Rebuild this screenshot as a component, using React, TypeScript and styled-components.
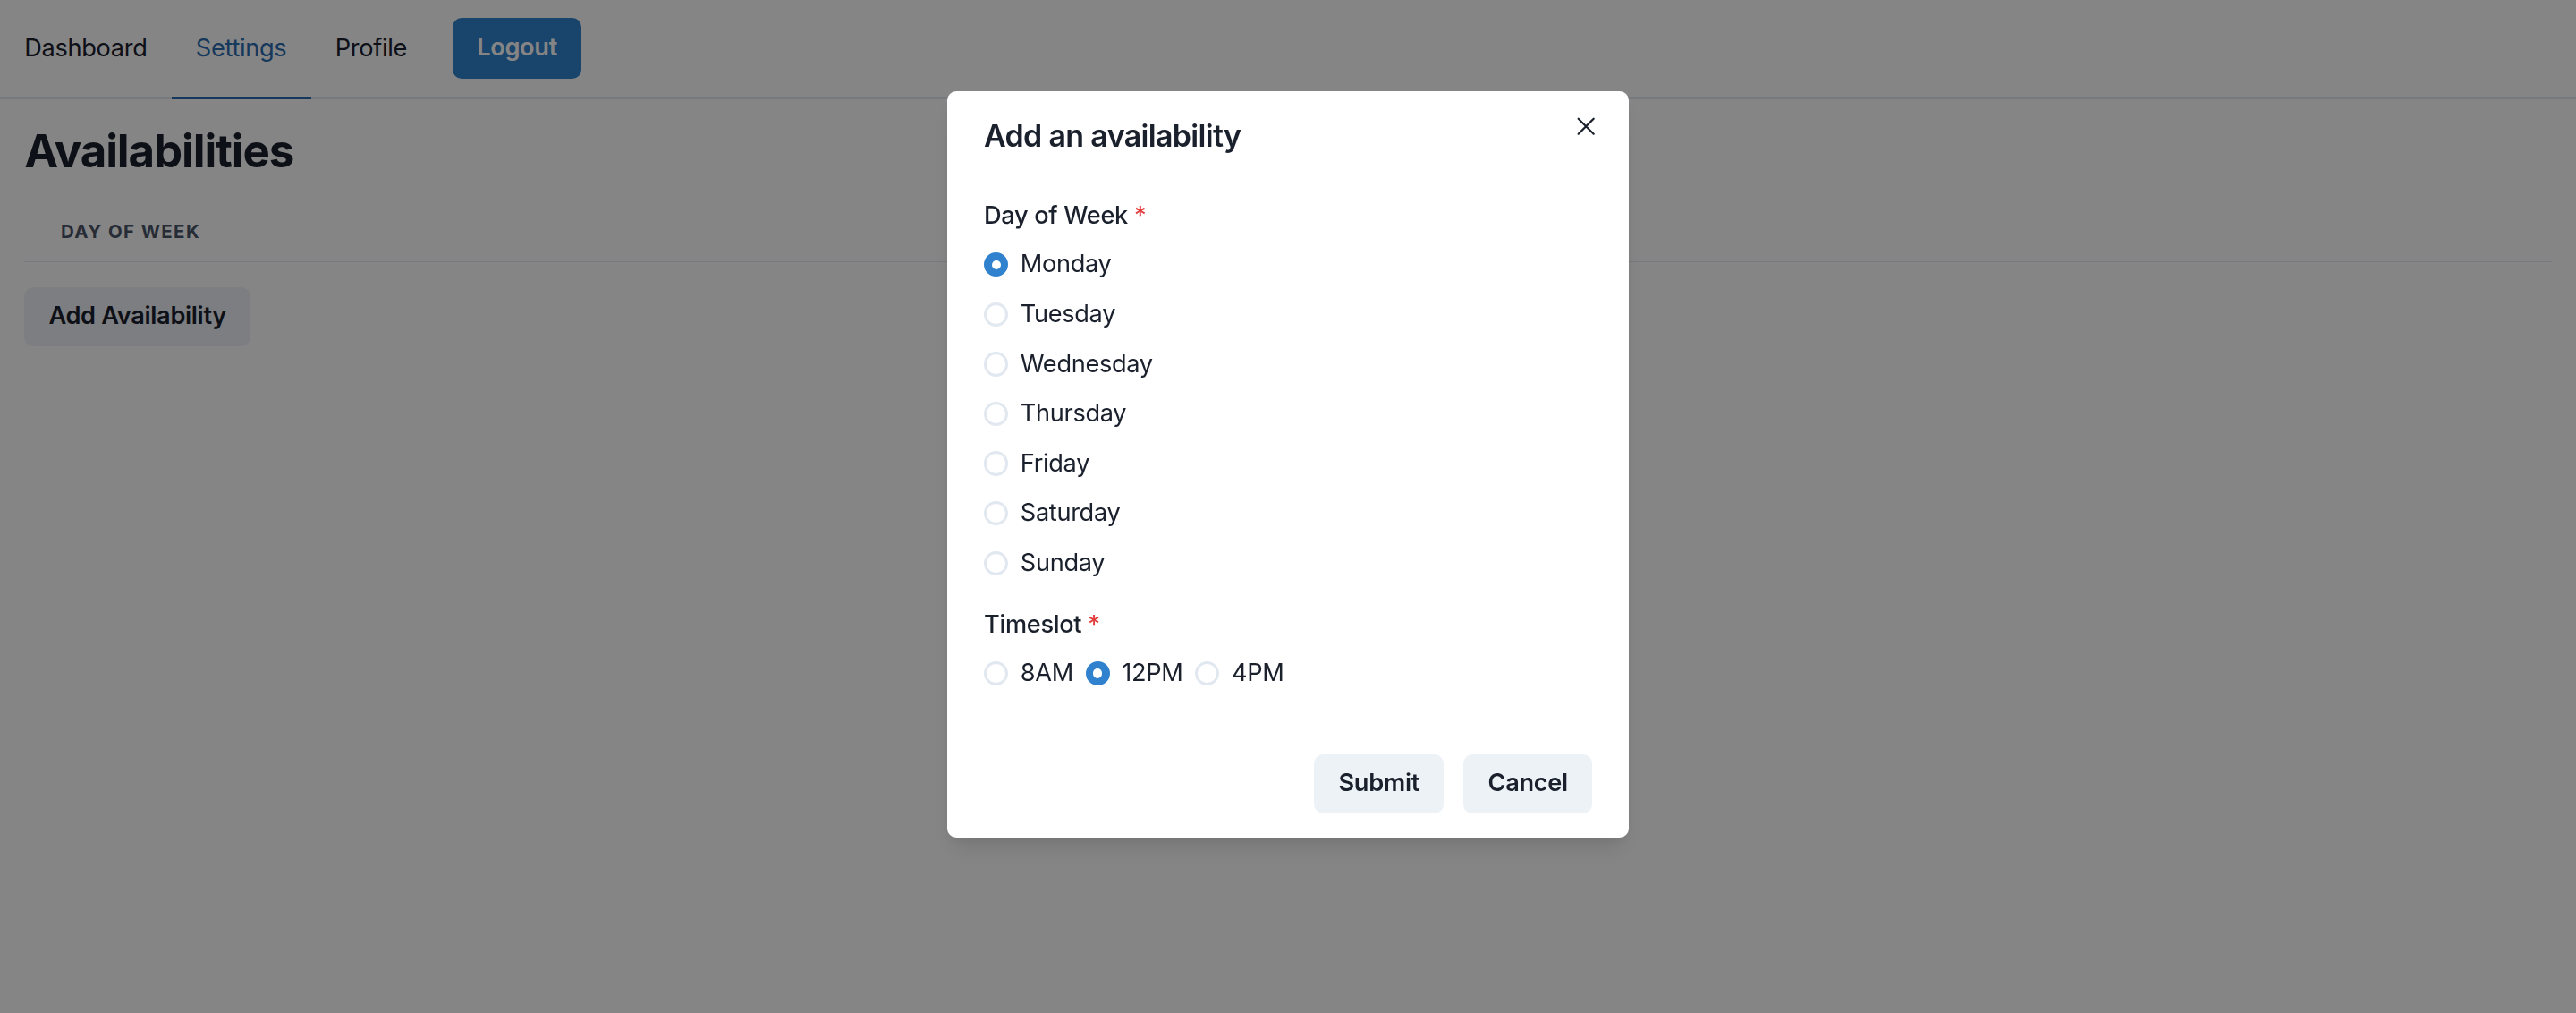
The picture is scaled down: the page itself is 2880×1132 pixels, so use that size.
import React from 'react';
import styled, { createGlobalStyle } from 'styled-components';

const Global = createGlobalStyle`
  html { zoom: 1.7; }
  body {
    margin: 0;
    font-family: Inter, "Noto Sans", sans-serif;
    letter-spacing: -0.012em;
    color: #1A202C;
    background: #ffffff;
    overflow: hidden;
  }
  * { box-sizing: border-box; }
`;

const Page = styled.div`
  display: flex;
  flex-direction: column;
`;

const Nav = styled.nav`
  display: flex;
  align-items: stretch;
  height: 65px;
  border-bottom: 2px solid #E2E8F0;
`;

const Tab = styled.button<{ $active?: boolean }>`
  display: flex;
  align-items: center;
  padding: 0 16px;
  margin-bottom: -2px;
  background: none;
  border: none;
  border-bottom: 2px solid ${(p) => (p.$active ? '#2B6CB0' : 'transparent')};
  color: ${(p) => (p.$active ? '#2B6CB0' : '#1A202C')};
  font-family: inherit;
  letter-spacing: inherit;
  font-size: 16px;
  line-height: 24px;
  cursor: pointer;
`;

const BaseButton = styled.button`
  display: inline-flex;
  align-items: center;
  justify-content: center;
  height: 39px;
  padding: 0 16px;
  border: none;
  border-radius: 6px;
  font-family: inherit;
  letter-spacing: inherit;
  font-size: 16px;
  font-weight: 600;
  line-height: 1.2;
  cursor: pointer;
`;

const LogoutButton = styled(BaseButton)`
  align-self: center;
  height: 40px;
  margin-left: 14px;
  background: #3182CE;
  color: #ffffff;
`;

const GrayButton = styled(BaseButton)`
  background: #EDF2F7;
  color: #1A202C;
`;

const Main = styled.main`
  padding: 16px;
`;

const Title = styled.h1`
  margin: 0 0 15px;
  font-size: 30px;
  font-weight: 700;
  line-height: 1.2;
  letter-spacing: -0.022em;
`;

const Table = styled.table`
  width: 100%;
  border-collapse: collapse;
  margin-bottom: 16px;
`;

const Th = styled.th`
  text-align: left;
  padding: 12px 24px;
  font-size: 12px;
  font-weight: 700;
  line-height: 16px;
  letter-spacing: 0.07em;
  text-transform: uppercase;
  color: #4A5568;
  border-bottom: 1px solid #E2E8F0;
`;

const Overlay = styled.div`
  position: fixed;
  inset: 0;
  background: rgba(0, 0, 0, 0.48);
  display: flex;
  justify-content: center;
  align-items: flex-start;
  padding-top: 60px;
`;

const Modal = styled.section`
  position: relative;
  width: 448px;
  background: #ffffff;
  border-radius: 6px;
  box-shadow: 0 10px 15px -3px rgba(0, 0, 0, 0.1), 0 4px 6px -2px rgba(0, 0, 0, 0.05);
`;

const ModalHeader = styled.header`
  padding: 14px 24px 18px;
  font-size: 20px;
  font-weight: 600;
  line-height: 30px;
  letter-spacing: -0.02em;
`;

const CloseButton = styled.button`
  position: absolute;
  top: 7px;
  right: 12px;
  width: 32px;
  height: 32px;
  display: flex;
  align-items: center;
  justify-content: center;
  background: transparent;
  border: none;
  border-radius: 6px;
  color: #1A202C;
  padding: 0;
  cursor: pointer;
`;

const ModalBody = styled.div`
  padding: 8px 24px 25px;
  display: flex;
  flex-direction: column;
  gap: 16.5px;
`;

const Field = styled.fieldset`
  border: none;
  margin: 0;
  padding: 0;
  min-width: 0;
`;

const Label = styled.legend`
  display: block;
  padding: 0;
  margin: 0 0 8px;
  font-size: 16px;
  font-weight: 500;
  line-height: 24px;
`;

const Required = styled.span`
  margin-left: 4px;
  color: #E53E3E;
`;

const RadioGroup = styled.div<{ $row?: boolean }>`
  display: flex;
  flex-direction: ${(p) => (p.$row ? 'row' : 'column')};
  gap: ${(p) => (p.$row ? '8px' : '8.7px')};
`;

const RadioItem = styled.label`
  display: inline-flex;
  align-items: center;
  gap: 8px;
  font-size: 16px;
  line-height: 24px;
  cursor: pointer;
`;

const RadioCircle = styled.span<{ $checked?: boolean }>`
  width: 16px;
  height: 16px;
  flex: none;
  border-radius: 50%;
  border: 2px solid ${(p) => (p.$checked ? '#3182CE' : '#E2E8F0')};
  background: ${(p) => (p.$checked ? '#3182CE' : '#ffffff')};
  display: flex;
  align-items: center;
  justify-content: center;
  &::before {
    content: '';
    display: ${(p) => (p.$checked ? 'block' : 'none')};
    width: 6px;
    height: 6px;
    border-radius: 50%;
    background: #ffffff;
  }
`;

const ModalFooter = styled.footer`
  display: flex;
  justify-content: flex-end;
  gap: 13px;
  padding: 16px 24px 16px;
`;

const days = ['Monday', 'Tuesday', 'Wednesday', 'Thursday', 'Friday', 'Saturday', 'Sunday'];
const slots = ['8AM', '12PM', '4PM'];

function Radio({ label, checked }: { label: string; checked?: boolean }) {
  return (
    <RadioItem>
      <RadioCircle $checked={checked} />
      {label}
    </RadioItem>
  );
}

export default function App() {
  return (
    <>
      <Global />
      <Page>
        <Nav>
          <Tab>Dashboard</Tab>
          <Tab $active>Settings</Tab>
          <Tab>Profile</Tab>
          <LogoutButton>Logout</LogoutButton>
        </Nav>
        <Main>
          <Title>Availabilities</Title>
          <Table>
            <thead>
              <tr>
                <Th>Day of Week</Th>
              </tr>
            </thead>
          </Table>
          <GrayButton>Add Availability</GrayButton>
        </Main>
      </Page>
      <Overlay>
        <Modal>
          <ModalHeader>Add an availability</ModalHeader>
          <CloseButton aria-label="Close">
            <svg width="12" height="12" viewBox="0 0 12 12" fill="none" stroke="currentColor" strokeWidth="1.3" strokeLinecap="round">
              <path d="M1 1L11 11M11 1L1 11" />
            </svg>
          </CloseButton>
          <ModalBody>
            <Field>
              <Label>
                Day of Week<Required>*</Required>
              </Label>
              <RadioGroup>
                {days.map((d) => (
                  <Radio key={d} label={d} checked={d === 'Monday'} />
                ))}
              </RadioGroup>
            </Field>
            <Field>
              <Label>
                Timeslot<Required>*</Required>
              </Label>
              <RadioGroup $row>
                {slots.map((s) => (
                  <Radio key={s} label={s} checked={s === '12PM'} />
                ))}
              </RadioGroup>
            </Field>
          </ModalBody>
          <ModalFooter>
            <GrayButton>Submit</GrayButton>
            <GrayButton>Cancel</GrayButton>
          </ModalFooter>
        </Modal>
      </Overlay>
    </>
  );
}
